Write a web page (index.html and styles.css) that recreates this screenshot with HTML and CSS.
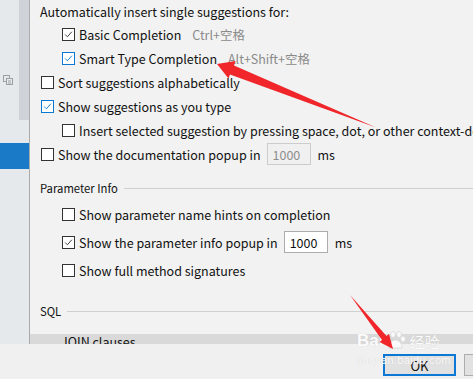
FILE: index.html
```html
<!DOCTYPE html>
<html lang="en">
<head>
    <meta charset="UTF-8">
    <title>Code Completion Settings</title>
    <link rel="stylesheet" href="styles.css">
</head>
<body>

    <div class="window">
        <!-- Settings tree (left) -->
        <aside class="sidebar">
            <div class="scroll-thumb"></div>
            <svg class="tree-icon" width="10" height="10" viewBox="0 0 10 10">
                <rect x="0.5" y="0.5" width="6" height="6" fill="none" stroke="#9aa0a6"/>
                <rect x="3.5" y="3.5" width="6" height="6" fill="#e6e9ec" stroke="#9aa0a6"/>
                <line x1="5" y1="6" x2="8" y2="6" stroke="#9aa0a6"/>
                <line x1="5" y1="8" x2="8" y2="8" stroke="#9aa0a6"/>
            </svg>
            <div class="tree-selected"></div>
        </aside>

        <!-- Settings panel -->
        <main class="panel">
            <div class="row row-first">Automatically insert single suggestions for:</div>

            <label class="row indent">
                <span class="box checked"><svg viewBox="0 0 13 13"><path d="M2.5 6.5 L5.2 9.2 L10.5 3.2"/></svg></span>
                Basic Completion <span class="shortcut">Ctrl+空格</span>
            </label>
            <label class="row indent">
                <span class="box checked focus"><svg viewBox="0 0 13 13"><path d="M2.5 6.5 L5.2 9.2 L10.5 3.2"/></svg></span>
                Smart Type Completion <span class="shortcut">Alt+Shift+空格</span>
            </label>
            <label class="row">
                <span class="box"></span>
                Sort suggestions alphabetically
            </label>
            <label class="row">
                <span class="box checked focus"><svg viewBox="0 0 13 13"><path d="M2.5 6.5 L5.2 9.2 L10.5 3.2"/></svg></span>
                Show suggestions as you type
            </label>
            <label class="row indent">
                <span class="box"></span>
                Insert selected suggestion by pressing space, dot, or other context-dependent keys
            </label>
            <label class="row">
                <span class="box"></span>
                Show the documentation popup in
                <span class="num disabled">1000</span>
                <span class="unit">ms</span>
            </label>

            <div class="section section-param">
                <span>Parameter Info</span>
                <div class="rule"></div>
            </div>

            <label class="row tall indent first-tall">
                <span class="box"></span>
                Show parameter name hints on completion
            </label>
            <label class="row tall indent">
                <span class="box checked"><svg viewBox="0 0 13 13"><path d="M2.5 6.5 L5.2 9.2 L10.5 3.2"/></svg></span>
                Show the parameter info popup in
                <span class="num">1000</span>
                <span class="unit">ms</span>
            </label>
            <label class="row tall indent">
                <span class="box"></span>
                Show full method signatures
            </label>

            <div class="section section-sql">
                <span>SQL</span>
                <div class="rule"></div>
            </div>

            <div class="band">
                <span>JOIN clauses</span>
            </div>
        </main>
    </div>

    <!-- Dialog buttons -->
    <footer class="footer">
        <button class="btn btn-default">OK</button>
        <button class="btn">Cancel</button>
    </footer>

    <!-- Watermark -->
    <div class="watermark">
        <div class="wm-logo">
            <span>Bai</span>
            <svg width="24" height="20" viewBox="0 0 24 20">
                <g fill="#fafafa" stroke="#d6d6d6" stroke-width="0.8">
                    <ellipse cx="5" cy="8" rx="2.4" ry="3"/>
                    <ellipse cx="10" cy="3.5" rx="2.4" ry="3"/>
                    <ellipse cx="16" cy="3.5" rx="2.4" ry="3"/>
                    <ellipse cx="20" cy="8" rx="2.4" ry="3"/>
                    <path d="M6 17 C6 11 10 9 12.5 9 C15 9 19 11 19 17 Z"/>
                </g>
            </svg>
            <span class="wm-cn">经验</span>
        </div>
        <div class="wm-url">jingyan.baidu.com</div>
    </div>

    <!-- Annotation arrows -->
    <svg class="arrows" width="473" height="379" viewBox="0 0 473 379">
        <polygon fill="#f0262a" points="217,64 235.5,61 234,65.5 376,127.5 230,74.5 228.5,78.5"/>
        <polygon fill="#f0262a" points="393,349 379.5,342 382,340 350,295 386.5,336 389,334"/>
    </svg>

</body>
</html>
```

FILE: styles.css
```css
/* Global */
* {
    margin: 0;
    padding: 0;
    box-sizing: border-box;
}

html, body {
    width: 473px;
    height: 379px;
    overflow: hidden;
}

body {
    position: relative;
    background: #f0f0f0;
    color: #111;
    font-family: "Noto Sans CJK SC", "Noto Sans", sans-serif;
    font-size: 12.5px;
}

/* Window */
.window {
    display: flex;
    height: 344px;
}

/* Sidebar */
.sidebar {
    position: relative;
    width: 30px;
    flex: none;
    background: #e6e9ec;
    border-right: 1px solid #a9abad;
}

.scroll-thumb {
    position: absolute;
    left: 19px;
    top: 0;
    width: 10px;
    height: 120px;
    background: #cfd2d6;
}

.tree-icon {
    position: absolute;
    left: 3px;
    top: 75px;
}

.tree-selected {
    position: absolute;
    left: 0;
    top: 143px;
    width: 29px;
    height: 26px;
    background: #1b7ac7;
}

/* Panel */
.panel {
    flex: 1;
    background: #f2f2f2;
    padding-left: 10px;
    overflow: hidden;
    white-space: nowrap;
    display: flex;
    flex-direction: column;
}

.row {
    display: flex;
    align-items: center;
    height: 24px;
}

.row-first {
    height: 22px;
}

.row.indent {
    padding-left: 21px;
}

.row.tall {
    height: 28px;
}

.first-tall {
    margin-top: 2px;
}

/* Checkboxes */
.box {
    flex: none;
    width: 13px;
    height: 13px;
    margin-left: 1px;
    margin-right: 4px;
    border: 1px solid #333;
    background: #fff;
    display: flex;
}

.box svg {
    width: 11px;
    height: 11px;
}

.box path {
    fill: none;
    stroke: #333;
    stroke-width: 1.1;
}

.box.focus {
    border-color: #0a78d4;
}

.box.focus path {
    stroke: #0a78d4;
}

.shortcut {
    color: #8a8a8a;
    margin-left: 11px;
}

/* Number fields */
.num {
    width: 44px;
    height: 22px;
    margin-left: 6px;
    padding-left: 5px;
    border: 1px solid #acacac;
    background: #fff;
    display: flex;
    align-items: center;
}

.num.disabled {
    border-color: #cccccc;
    background: #f0f0f0;
    color: #8c8c8c;
}

.unit {
    margin-left: 7px;
}

/* Section headers */
.section {
    display: flex;
    align-items: center;
    height: 20px;
    font-size: 11.3px;
}

.section .rule {
    flex: 1;
    height: 1px;
    margin-left: 6px;
    background: #d0d0d0;
}

.section-param {
    margin-top: 12px;
}

.section-sql {
    margin-top: 17px;
}

/* Clipped list row */
.band {
    margin-top: 13px;
    margin-left: -10px;
    height: 10px;
    overflow: hidden;
    background: #d9d9d9;
    padding-left: 31px;
    line-height: 10px;
    padding-top: 3px;
}

/* Footer */
.footer {
    display: flex;
    gap: 8px;
    height: 35px;
    padding-top: 10px;
    padding-left: 383px;
    background: #f0f0f0;
    overflow: hidden;
}

.btn {
    flex: none;
    width: 73px;
    height: 22px;
    background: #e1e1e1;
    border: 1px solid #adadad;
    font-family: "Noto Sans CJK SC", "Noto Sans", sans-serif;
    font-size: 13px;
    color: #111;
}

.btn-default {
    border: 2px solid #0a78d4;
}

/* Watermark */
.watermark {
    position: absolute;
    left: 357px;
    top: 330px;
    color: #fbfbfb;
    text-shadow: 0 0 1px #c8c8c8;
    pointer-events: none;
}

.wm-logo {
    display: flex;
    align-items: center;
    font-family: "Liberation Sans", sans-serif;
    font-size: 17px;
    font-weight: bold;
    height: 22px;
}

.wm-cn {
    font-family: "Noto Sans CJK SC", sans-serif;
    font-weight: normal;
    font-size: 15px;
    margin-left: 2px;
}

.wm-url {
    font-family: "Liberation Sans", sans-serif;
    font-size: 11px;
    letter-spacing: 0.3px;
    margin-top: 2px;
}

/* Annotations */
.arrows {
    position: absolute;
    left: 0;
    top: 0;
    pointer-events: none;
}
```
